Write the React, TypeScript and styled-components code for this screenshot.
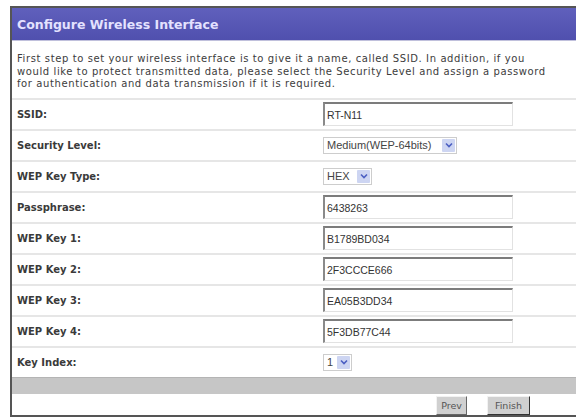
import React from 'react';
import styled, { createGlobalStyle } from 'styled-components';

const GlobalStyle = createGlobalStyle`
  html, body {
    margin: 0;
    padding: 0;
    background: #fff;
    overflow: hidden;
  }
`;

const introLines = [
  'First step to set your wireless interface is to give it a name, called SSID. In addition, if you',
  'would like to protect transmitted data, please select the Security Level and assign a password',
  'for authentication and data transmission if it is required.',
];

const fields: { label: string; kind: 'text' | 'select'; value: string; width: number }[] = [
  { label: 'SSID:', kind: 'text', value: 'RT-N11', width: 190 },
  { label: 'Security Level:', kind: 'select', value: 'Medium(WEP-64bits)', width: 134 },
  { label: 'WEP Key Type:', kind: 'select', value: 'HEX', width: 49 },
  { label: 'Passphrase:', kind: 'text', value: '6438263', width: 190 },
  { label: 'WEP Key 1:', kind: 'text', value: 'B1789BD034', width: 190 },
  { label: 'WEP Key 2:', kind: 'text', value: '2F3CCCE666', width: 190 },
  { label: 'WEP Key 3:', kind: 'text', value: 'EA05B3DD34', width: 190 },
  { label: 'WEP Key 4:', kind: 'text', value: '5F3DB77C44', width: 190 },
  { label: 'Key Index:', kind: 'select', value: '1', width: 29 },
];

const Chevron = () => (
  <svg width="8" height="6" viewBox="0 0 8 6">
    <path d="M1 1.5 L4 4.5 L7 1.5" fill="none" stroke="#4b5fc2" strokeWidth="1.6" />
  </svg>
);

const Select = ({ value, width }: { value: string; width: number }) => (
  <SelectBox style={{ width }}>
    <span>{value}</span>
    <Arrow>
      <Chevron />
    </Arrow>
  </SelectBox>
);

const App = () => {
  return (
    <>
      <GlobalStyle />
      <Panel>
        <Title>Configure Wireless Interface</Title>
        <Intro>
          {introLines.map((line) => (
            <IntroLine key={line}>{line}</IntroLine>
          ))}
        </Intro>
        {fields.map((f) => (
          <Row key={f.label}>
            <Label>{f.label}</Label>
            <Cell>
              {f.kind === 'text' ? (
                <TextBox readOnly value={f.value} style={{ width: f.width }} />
              ) : (
                <Select value={f.value} width={f.width} />
              )}
            </Cell>
          </Row>
        ))}
        <GrayBar />
        <Footer>
          <Button>Prev</Button>
          <Button $primary>Finish</Button>
        </Footer>
      </Panel>
    </>
  );
};

const Panel = styled.div`
  margin: 6px 0 0 10px;
  width: 566px;
  border: 2px solid #555;
  border-right: none;
  background: #fff;
`;

const Title = styled.div`
  height: 32px;
  display: flex;
  align-items: center;
  padding-left: 5px;
  background: linear-gradient(#6060bc, #5050ae);
  color: #e4e2ff;
  font: bold 12.5px 'DejaVu Sans', sans-serif;
  border-bottom: 1px solid #c0c0dc;
`;

const Intro = styled.div`
  padding: 12px 0 7px 5px;
  font: 10px/12.5px 'DejaVu Sans', sans-serif;
  letter-spacing: 0.6px;
  color: #3c3c3c;
`;

const IntroLine = styled.div`
  white-space: nowrap;
`;

const Row = styled.div`
  display: grid;
  grid-template-columns: 308px 1fr;
  align-items: center;
  height: 29px;
  border-top: 2px solid #e6e6e6;
`;

const Label = styled.div`
  padding-left: 5px;
  font: bold 10px 'DejaVu Sans', sans-serif;
  color: #3a3a3a;
`;

const Cell = styled.div`
  padding-left: 3px;
  display: flex;
  align-items: center;
`;

const TextBox = styled.input`
  box-sizing: border-box;
  height: 24px;
  padding: 0 2px;
  border-style: solid;
  border-width: 2px 1px 1px 2px;
  border-color: #7c7c7c #e2e2e2 #e2e2e2 #8a8a8a;
  font: 10.5px 'Liberation Sans', sans-serif;
  color: #333;
  background: #fff;
  outline: none;
`;

const SelectBox = styled.div`
  box-sizing: border-box;
  height: 17px;
  display: flex;
  align-items: center;
  justify-content: space-between;
  padding: 0 1px 0 3px;
  border: 1px solid #cdcdcd;
  background: #fff;
  font: 11px 'Liberation Sans', sans-serif;
  color: #444;
  white-space: nowrap;
`;

const Arrow = styled.span`
  width: 13px;
  height: 13px;
  display: flex;
  align-items: center;
  justify-content: center;
  background: #cdd5f2;
  border-radius: 1px;
`;

const GrayBar = styled.div`
  height: 16px;
  background: #c6c6c6;
  border-top: 1px solid #b4b4b4;
`;

const Footer = styled.div`
  height: 21px;
  display: flex;
  justify-content: flex-end;
  align-items: flex-start;
  gap: 20px;
  padding: 2px 48px 0 0;
  box-sizing: border-box;
`;

const Button = styled.button<{ $primary?: boolean }>`
  height: 19px;
  padding: 0 ${(p) => (p.$primary ? '7px' : '4px')};
  background: #d0d0d0;
  border: 1px solid;
  border-color: #f2f2f2 ${(p) => (p.$primary ? '#333' : '#666')} ${(p) => (p.$primary ? '#333' : '#666')} #f2f2f2;
  font: 9.5px 'DejaVu Sans', sans-serif;
  color: #555;
`;

export default App;
